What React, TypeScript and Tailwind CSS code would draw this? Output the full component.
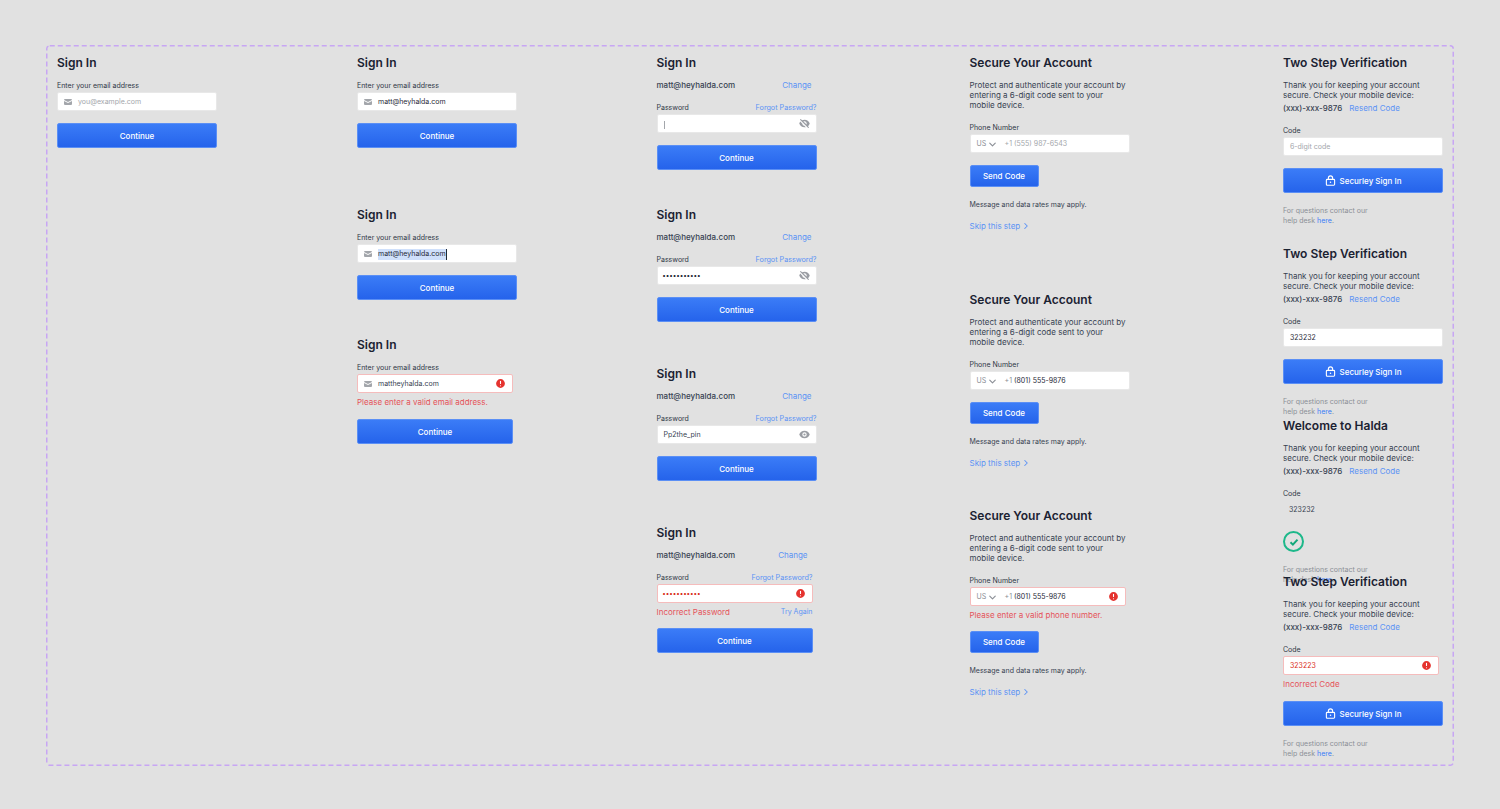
import { ReactNode } from "react";
import {
  HiMail as Mail,
  HiEye as Eye,
  HiEyeOff as EyeOff,
  HiExclamationCircle as Alert,
} from "react-icons/hi";
import { ChevronDown, ChevronRight } from "lucide-react";

const Title = ({ children }: { children: ReactNode }) => (
  <h3 className="h-4 text-[12px] leading-[18px] font-semibold text-[#1b2232]">{children}</h3>
);

const Label = ({ children, right }: { children: ReactNode; right?: ReactNode }) => (
  <div className="flex h-[10px] items-start justify-between text-[7px] leading-[12px] font-normal text-[#2f3746]">
    <span>{children}</span>
    {right}
  </div>
);

const Box = ({
  children,
  error,
  className = "w-[160px]",
}: {
  children: ReactNode;
  error?: boolean;
  className?: string;
}) => (
  <div
    className={
      "mt-[2px] flex h-[19px] items-center rounded-[2px] border bg-white text-[7px] text-[#374151] [&>span]:mt-[2px] " +
      (error ? "border-[#f5bcbc] " : "border-[#e8e8e8] ") +
      className
    }>
    {children}
  </div>
);

const Primary = ({ children, className }: { children: ReactNode; className: string }) => (
  <button
    className={
      "flex items-center justify-center gap-1 rounded-[2px] border border-[#5b8ff5] bg-gradient-to-b from-[#3b7cf7] to-[#2563eb] text-[8px] font-medium text-white " +
      className
    }>
    {children}
  </button>
);

const Continue = ({ className = "mt-3 w-[160px]" }: { className?: string }) => (
  <Primary className={"h-[25px] " + className}>Continue</Primary>
);

const ErrorText = ({ children }: { children: ReactNode }) => (
  <div className="mt-1 h-[10px] text-[8px] leading-[10px] text-[#e5535a]">{children}</div>
);

const AlertIcon = () => <Alert className="ml-auto mr-[6px] h-[11px] w-[11px] text-[#e5332f]" />;

const MailIcon = () => <Mail className="ml-[5px] mr-[5px] h-[10px] w-[10px] text-[#a3a6ab]" />;

const Account = ({ w = "w-[160px]" }: { w?: string }) => (
  <div className={"mt-[10px] flex h-[10px] items-center justify-between pr-[5px] text-[8px] leading-[10px] " + w}>
    <span className="font-medium text-[#374151]">matt@heyhalda.com</span>
    <a className="text-[#5c93f5]">Change</a>
  </div>
);

const Forgot = () => <a className="text-[7.2px] text-[#5c93f5]">Forgot Password?</a>;

const SignInFrame = ({ children, height }: { children: ReactNode; height: string }) => (
  <section className={height}>
    <Title>Sign In</Title>
    {children}
  </section>
);

const Usa = () => (
  <span className="ml-[6px] flex w-[28px] items-center gap-[1px] text-[#8b8f96]">
    US
    <ChevronDown className="h-[11px] w-[11px]" strokeWidth={2.5} />
  </span>
);

const Protect = () => (
  <p className="mt-[10px] h-[30px] text-[8px] leading-[10px] text-[#374151]">
    Protect and authenticate your account by entering a 6-digit code sent to your mobile device.
  </p>
);

const SendCode = ({ mt = "mt-3" }: { mt?: string }) => (
  <>
    <Primary className={"h-[22px] w-[69px] " + mt}>Send Code</Primary>
    <p className="mt-[13px] h-[10px] text-[7px] leading-[10px] text-[#374151]">Message and data rates may apply.</p>
    <a className="mt-[11px] flex h-[10px] items-center text-[8px] leading-[10px] text-[#5c93f5]">
      Skip this step
      <ChevronRight className="ml-[1px] h-[10px] w-[10px]" strokeWidth={2.5} />
    </a>
  </>
);

const SecureFrame = ({ children, height }: { children: ReactNode; height: string }) => (
  <section className={"w-[160px] " + height}>
    <Title>Secure Your Account</Title>
    <Protect />
    <div className="mt-[12px]">
      <Label>Phone Number</Label>
    </div>
    {children}
  </section>
);

const Thanks = () => (
  <>
    <p className="mt-[10px] h-[20px] text-[8px] leading-[10px] text-[#374151]">
      Thank you for keeping your account secure. Check your mobile device:
    </p>
    <div className="mt-[3px] flex h-[10px] items-center gap-[7px] text-[8px] leading-[10px]">
      <span className="font-medium text-[#374151]">(xxx)-xxx-9876</span>
      <a className="text-[#5c93f5]">Resend Code</a>
    </div>
    <div className="mt-3">
      <Label>Code</Label>
    </div>
  </>
);

const LockIcon = () => (
  <svg viewBox="0 0 12 12" className="h-[11px] w-[11px]" fill="none" stroke="currentColor" strokeWidth="1.2">
    <rect x="1.5" y="4.8" width="9" height="6.4" rx="1" />
    <path d="M3.7 4.8V3.2a2.3 2.3 0 0 1 4.6 0v1.6" />
    <circle cx="6" cy="8" r="0.8" fill="currentColor" stroke="none" />
  </svg>
);

const SecureSignIn = ({ mt = "mt-3" }: { mt?: string }) => (
  <Primary className={"h-[25px] w-[160px] " + mt}>
    <LockIcon />
    Securley Sign In
  </Primary>
);

const HelpDesk = ({ mt = "mt-[13px]" }: { mt?: string }) => (
  <p className={"h-[20px] text-[7px] leading-[10px] text-[#8b8f96] " + mt}>
    For questions contact our
    <br />
    help desk <a className="text-[#3b7cf7]">here</a>.
  </p>
);

const App = () => {
  return (
    <div className="h-[809px] w-[1500px] overflow-hidden bg-[#e1e1e1] pt-[45px] pl-[46px] font-['Inter',sans-serif]">
      <div className="relative grid h-[721px] w-[1408px] grid-cols-[300px_299.5px_313px_313.5px_1fr] pt-[9px] pl-[11px]">
        {/* purple selection frame around the states */}
        <svg className="absolute inset-0 h-full w-full" fill="none">
          <rect
            x="0.75"
            y="0.75"
            width="1406.5"
            height="719.5"
            rx="3"
            stroke="#c8a6f4"
            strokeWidth="1.5"
            strokeDasharray="5 3"
          />
        </svg>

        {/* email column */}
        <div>
          <SignInFrame height="h-[152px]">
            <div className="mt-[10px] w-[160px]">
              <Label>Enter your email address</Label>
            </div>
            <Box>
              <MailIcon />
              <span className="text-[#a3a6ab]">you@example.com</span>
            </Box>
            <Continue />
          </SignInFrame>
        </div>

        {/* email states */}
        <div>
          <SignInFrame height="h-[152px]">
            <div className="mt-[10px] w-[160px]">
              <Label>Enter your email address</Label>
            </div>
            <Box>
              <MailIcon />
              <span className="text-[#1f2937]">matt@heyhalda.com</span>
            </Box>
            <Continue />
          </SignInFrame>
          <SignInFrame height="h-[130px]">
            <div className="mt-[10px] w-[160px]">
              <Label>Enter your email address</Label>
            </div>
            <Box>
              <MailIcon />
              <span className="border-r border-[#1f2937] bg-[#cfe0fb] text-[#1f2937]">matt@heyhalda.com</span>
            </Box>
            <Continue />
          </SignInFrame>
          <SignInFrame height="h-[130px]">
            <div className="mt-[10px] w-[156px]">
              <Label>Enter your email address</Label>
            </div>
            <Box error className="w-[156px]">
              <MailIcon />
              <span>mattheyhalda.com</span>
              <AlertIcon />
            </Box>
            <ErrorText>Please enter a valid email address.</ErrorText>
            <Continue className="mt-3 w-[156px]" />
          </SignInFrame>
        </div>

        {/* password states */}
        <div>
          <SignInFrame height="h-[152px]">
            <Account />
            <div className="mt-3 w-[160px]">
              <Label right={<Forgot />}>Password</Label>
            </div>
            <Box>
              <span className="ml-[6px] h-2 w-px bg-[#a3a6ab]" />
              <EyeOff className="ml-auto mr-[6px] h-[11px] w-[11px] text-[#9a9da3]" />
            </Box>
            <Continue />
          </SignInFrame>
          <SignInFrame height="h-[159px]">
            <Account />
            <div className="mt-3 w-[160px]">
              <Label right={<Forgot />}>Password</Label>
            </div>
            <Box>
              <span className="ml-[5px] text-[6.5px] font-bold tracking-[0.4px] text-[#1f2937]">•••••••••••</span>
              <EyeOff className="ml-auto mr-[6px] h-[11px] w-[11px] text-[#9a9da3]" />
            </Box>
            <Continue />
          </SignInFrame>
          <SignInFrame height="h-[159px]">
            <Account />
            <div className="mt-3 w-[160px]">
              <Label right={<Forgot />}>Password</Label>
            </div>
            <Box>
              <span className="ml-[6px]">Pp2the_pin</span>
              <Eye className="ml-auto mr-[6px] h-[11px] w-[11px] text-[#9a9da3]" />
            </Box>
            <Continue />
          </SignInFrame>
          <SignInFrame height="h-[159px]">
            <Account w="w-[156px]" />
            <div className="mt-3 w-[156px]">
              <Label right={<Forgot />}>Password</Label>
            </div>
            <Box error className="w-[156px]">
              <span className="ml-[5px] text-[6.5px] font-bold tracking-[0.4px] text-[#d92d20]">•••••••••••</span>
              <AlertIcon />
            </Box>
            <div className="mt-1 flex h-[10px] w-[156px] items-center justify-between">
              <span className="text-[8px] text-[#e5535a]">Incorrect Password</span>
              <a className="text-[7px] text-[#5c93f5]">Try Again</a>
            </div>
            <Continue className="mt-[11px] w-[156px]" />
          </SignInFrame>
        </div>

        {/* phone states */}
        <div>
          <SecureFrame height="h-[237px]">
            <Box>
              <Usa />
              <span className="text-[#a3a6ab]">+1 (555) 987-6543</span>
            </Box>
            <SendCode />
          </SecureFrame>
          <SecureFrame height="h-[216px]">
            <Box>
              <Usa />
              <span className="text-[#8b8f96]">+1</span>
              <span className="ml-[2px] text-[#1f2937]">(801) 555-9876</span>
            </Box>
            <SendCode />
          </SecureFrame>
          <SecureFrame height="h-[200px]">
            <Box error className="w-[156px]">
              <Usa />
              <span className="text-[#8b8f96]">+1</span>
              <span className="ml-[2px] text-[#1f2937]">(801) 555-9876</span>
              <AlertIcon />
            </Box>
            <ErrorText>Please enter a valid phone number.</ErrorText>
            <SendCode mt="mt-[11px]" />
          </SecureFrame>
        </div>

        {/* code states */}
        <div className="w-[160px]">
          <section className="h-[191px]">
            <Title>Two Step Verification</Title>
            <Thanks />
            <Box>
              <span className="ml-[6px] text-[#a3a6ab]">6-digit code</span>
            </Box>
            <SecureSignIn />
            <HelpDesk />
          </section>
          <section className="h-[172px]">
            <Title>Two Step Verification</Title>
            <Thanks />
            <Box>
              <span className="ml-[6px] text-[#1f2937]">323232</span>
            </Box>
            <SecureSignIn />
            <HelpDesk />
          </section>
          <section className="h-[156px]">
            <Title>Welcome to Halda</Title>
            <Thanks />
            <div className="mt-[2px] flex h-[19px] items-center pl-[6px] text-[7px] text-[#374151]">
              <span className="mt-[2px]">323232</span>
            </div>
            <div className="mt-[12px] flex h-[21px] w-[21px] items-center justify-center rounded-full border-2 border-[#1db88a]">
              <svg viewBox="0 0 12 12" className="h-3 w-3" fill="none" stroke="#12a87a" strokeWidth="2">
                <path d="M2.5 6.3l2.4 2.3 4.6-5" />
              </svg>
            </div>
            <HelpDesk />
          </section>
          <section>
            <Title>Two Step Verification</Title>
            <Thanks />
            <Box error className="w-[156px]">
              <span className="ml-[6px] text-[#d92d20]">323223</span>
              <AlertIcon />
            </Box>
            <ErrorText>Incorrect Code</ErrorText>
            <SecureSignIn mt="mt-[12px]" />
            <HelpDesk />
          </section>
        </div>
      </div>
    </div>
  );
};

export default App;
